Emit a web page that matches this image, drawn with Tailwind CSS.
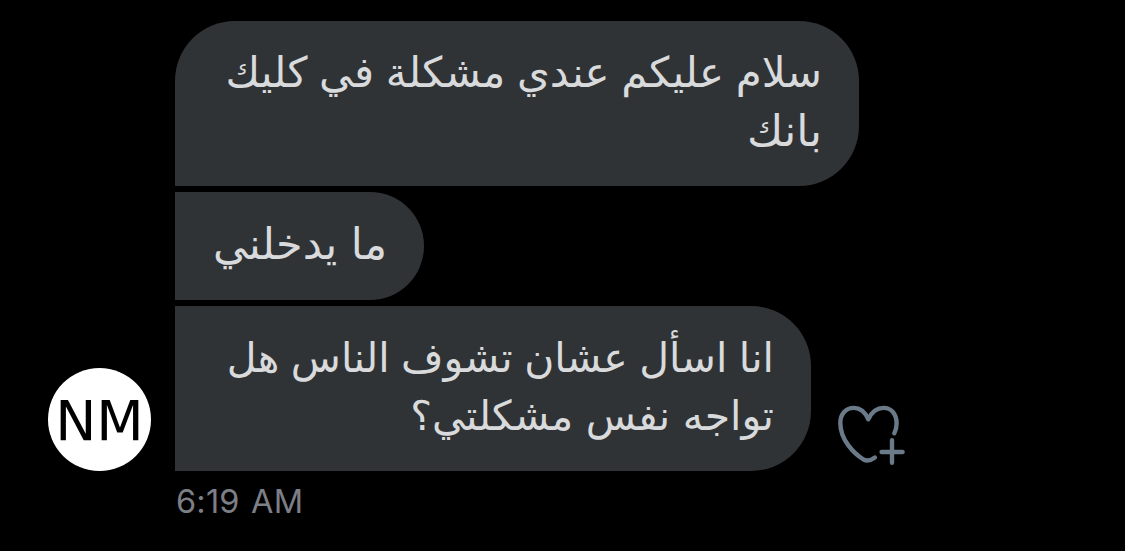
<!DOCTYPE html>
<html lang="ar">
<head>
    <meta charset="UTF-8">
    <meta name="viewport" content="width=device-width, initial-scale=1.0">
    <title>Messages</title>
    <script src="https://cdn.jsdelivr.net/npm/@tailwindcss/browser@4"></script>
</head>
<body class="bg-black min-h-screen overflow-hidden">
    <main class="flex flex-col pl-12 pt-[21px]">
        <div class="flex items-end">
            <div class="w-[103px] h-[103px] mr-6 pt-[3px] shrink-0 rounded-full bg-white text-black flex items-center justify-center font-['DejaVu_Sans',sans-serif] text-[55px] leading-none">NM</div>
            <section class="flex flex-col items-start gap-1.5 font-['DejaVu_Sans',sans-serif] text-[41px] leading-[58px] text-[#d9dadc]">
                <div dir="rtl" class="w-[684px] h-[165px] pt-[23px] px-[37px] rounded-[60px] rounded-bl-none bg-[#303336] whitespace-nowrap">
                    <p class="text-[42px] [word-spacing:-1.7px]">سلام عليكم عندي مشكلة في كليك</p>
                    <p class="text-[44px]">بانك</p>
                </div>
                <div dir="rtl" class="w-[249px] h-[108px] pt-[23px] px-[37px] rounded-r-[54px] bg-[#303336] whitespace-nowrap">
                    <p class="text-[43px]">ما يدخلني</p>
                </div>
                <div dir="rtl" class="w-[636px] h-[165px] pt-[23px] px-[37px] rounded-r-[60px] bg-[#303336] whitespace-nowrap">
                    <p class="[word-spacing:-1.6px]">انا اسأل عشان تشوف الناس هل</p>
                    <p class="[word-spacing:-0.5px]">تواجه نفس مشكلتي؟</p>
                </div>
            </section>
            <button class="-ml-[23px] mb-1" aria-label="React">
                <svg viewBox="0 0 70 64" class="w-[70px] h-[64px]" fill="none" stroke="#6b7a88" stroke-width="4.4" stroke-linecap="round" stroke-linejoin="round">
                    <path d="M58.3 30.2C60 27 60.6 23.5 60.6 20.3C60.6 10.5 55 4.9 47.6 4.9C40.5 4.9 35.5 9.5 32.3 16.3C29.3 9.5 24.5 4.9 17.8 4.9C10 4.9 4.3 10.8 4.3 20C4.3 37 18 50.5 27.5 56.5C31 58.5 35 57.5 38.9 54.6" />
                    <path d="M56 37.3v22.5M45.6 49h21" />
                </svg>
            </button>
        </div>
        <time dir="ltr" class="pl-[128px] pt-[11px] font-['Inter',sans-serif] text-[32.5px] leading-[40px] tracking-[0.2px] [word-spacing:2px] text-[#7d7f86]">6:19 AM</time>
    </main>
</body>
</html>
